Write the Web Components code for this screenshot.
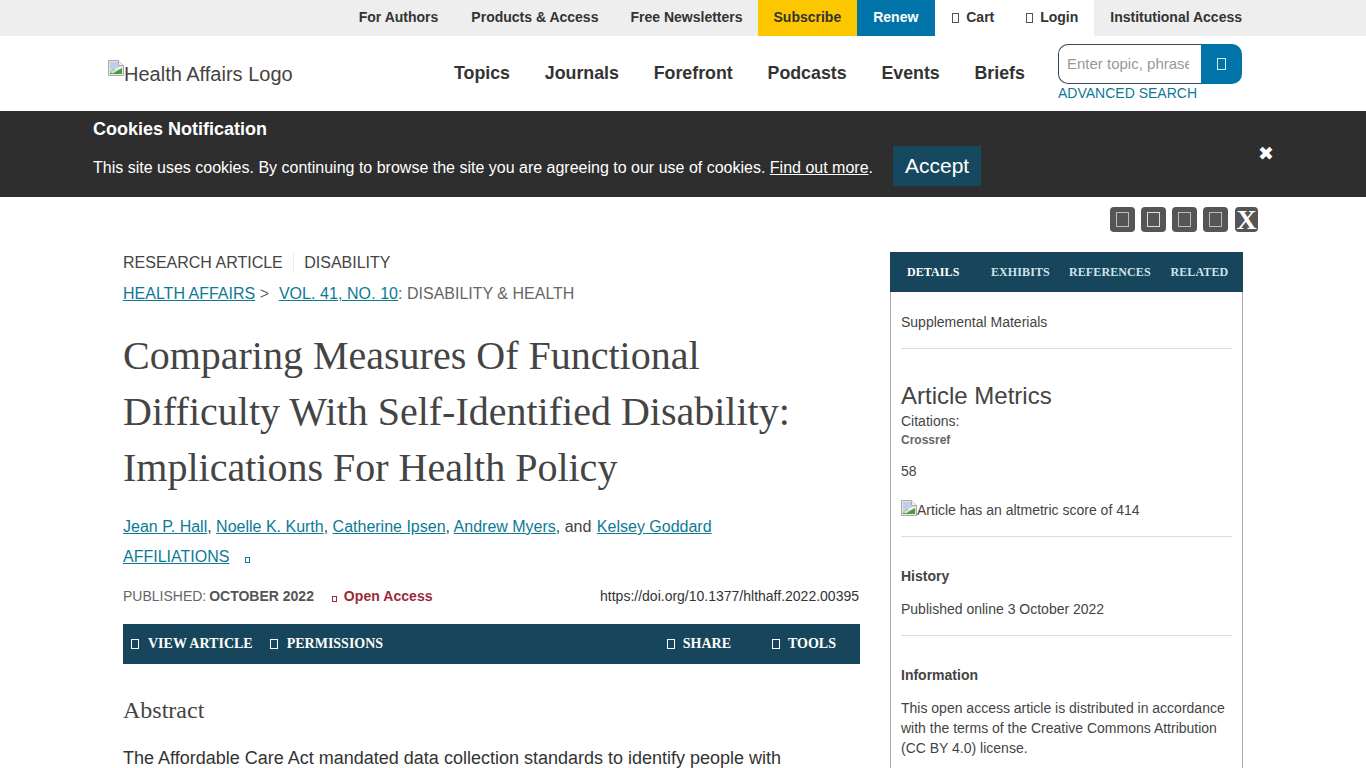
<!DOCTYPE html>
<html lang="en"><head><meta charset="utf-8"><title>Health Affairs</title>
<style>
html,body{margin:0;padding:0;height:768px;overflow:hidden;background:#fff}
body{font-family:"Liberation Sans",Arial,sans-serif;color:#333}
</style></head><body>
<ha-topbar></ha-topbar>
<ha-header></ha-header>
<ha-cookies></ha-cookies>
<ha-social></ha-social>
<ha-page>
  <ha-article></ha-article>
  <ha-sidebar slot="side"></ha-sidebar>
</ha-page>
<script>
const tofu=(w,h,c,sw=1)=>`<svg width="${w}" height="${h}" viewBox="0 0 ${w} ${h}" style="display:inline-block;vertical-align:-1px" aria-hidden="true"><rect x="${sw/2}" y="${sw/2}" width="${w-sw}" height="${h-sw}" fill="none" stroke="${c}" stroke-width="${sw}"/></svg>`;
const broken=`<svg width="16" height="16" viewBox="0 0 16 16" style="flex:none" aria-hidden="true"><path d="M.5.5h10l5 5v10H.5z" fill="#dfe6f0" stroke="#a9a9a9"/><path d="M10.5.5v5h5" fill="#f4f4f4" stroke="#a9a9a9"/><path d="M2 2h8v4h4v3H2z" fill="#bfcfe8"/><path d="M2 14v-3l4-2 3 1 5-2v6z" fill="#4f9a3e"/><path d="M1 12L13 6l1.500 1.500L5 13.500z" fill="#fff" opacity=".7"/></svg>`;
function def(name,html){customElements.define(name,class extends HTMLElement{constructor(){super();this.attachShadow({mode:'open'}).innerHTML=html}})}

def('ha-topbar',`<style>
:host{display:flex;justify-content:flex-end;height:36px;background:#eee;padding-right:108px;font:bold 14px/34px "Liberation Sans",Arial,sans-serif;color:#333}
span{padding:0 16px;display:block;white-space:nowrap}
.fa{padding-right:17px}.fn{padding-right:15px}
.sub{background:#fdc700}.ren{background:#0074a8;color:#fff;padding-right:17px}.w{background:#fff}
.cart{padding-left:17px}
svg{margin-right:3px}
</style>
<span class="fa">For Authors</span><span>Products &amp; Access</span><span class="fn">Free Newsletters</span><span class="sub">Subscribe</span><span class="ren">Renew</span><span class="w cart">${tofu(7,10,'#555')} Cart</span><span class="w">${tofu(7,10,'#555')} Login</span><span>Institutional Access</span>`);

def('ha-header',`<style>
:host{display:flex;align-items:flex-start;height:75px;box-sizing:border-box;padding:0 124px 0 108px;background:#fff;font-family:"Liberation Sans",Arial,sans-serif}
.logo{display:flex;align-items:flex-start;font-size:20px;line-height:23px;color:#444;margin-top:24px;width:346px;white-space:nowrap}
.logo span{margin-top:3px}
nav{display:flex;gap:34.8px;font-size:17.8px;font-weight:bold;line-height:21px;color:#333;margin-top:27px;flex:1;white-space:nowrap}
.s{width:184px;margin-top:8px;flex:none}
.box{display:flex;height:40px}
.in{width:143px;box-sizing:border-box;border:1px solid #33495a;border-right:0;border-radius:10px 0 0 10px;font-size:15px;color:#999;line-height:38px;padding-left:8px;overflow:hidden;white-space:nowrap}
.in i{display:block;width:122px;overflow:hidden;font-style:normal}
.b{width:41px;background:#0074a8;border-radius:0 10px 10px 0;display:flex;align-items:center;justify-content:center}
a{display:block;font-size:14px;line-height:18px;color:#0d7a94;white-space:nowrap}
</style>
<div class="logo">${broken}<span>Health Affairs Logo</span></div>
<nav><span>Topics</span><span>Journals</span><span>Forefront</span><span>Podcasts</span><span>Events</span><span>Briefs</span></nav>
<div class="s"><div class="box"><div class="in"><i>Enter topic, phrase</i></div><div class="b">${tofu(9,12,'#d8f0f5')}</div></div><a>ADVANCED SEARCH</a></div>`);

def('ha-cookies',`<style>
:host{display:block;height:86px;box-sizing:border-box;background:#2e2e2e;color:#fff;padding:8px 93px 0;position:relative;font-family:"Liberation Sans",Arial,sans-serif}
h2{margin:0;font-size:18px;line-height:21px;font-weight:bold}
.r{display:flex;align-items:center;margin-top:6px;font-size:16px;white-space:nowrap}
.r .tx{margin-top:4px}
a{color:#fff;text-decoration:underline}
.acc{margin-left:20px;background:#16495f;font-size:21px;line-height:40px;height:40px;padding:0 12px}
.x{position:absolute;left:1258px;top:31px;font-size:19px;line-height:22px;font-weight:bold;font-family:"DejaVu Sans",sans-serif}
</style>
<h2>Cookies Notification</h2>
<div class="r"><span class="tx">This site uses cookies. By continuing to browse the site you are agreeing to our use of cookies. <a>Find out more</a>.</span><span class="acc">Accept</span></div>
<span class="x">✖</span>`);

def('ha-social',`<style>
:host{display:flex;justify-content:flex-end;gap:6px;height:55px;box-sizing:border-box;padding:10px 108px 0 0}
b{width:25px;height:25px;border-radius:4px;background:#555;display:flex;align-items:center;justify-content:center;color:#fff}
b.x{width:23px;font:bold 28px/25px "Liberation Serif",serif;margin-left:1px}
b:first-child{margin-right:1px}
</style>
<b>${tofu(13,15,'#bbb')}</b><b>${tofu(13,15,'#ddd')}</b><b>${tofu(13,15,'#bbb')}</b><b>${tofu(13,15,'#bbb')}</b><b class="x">X</b>`);

def('ha-page',`<style>
:host{display:flex;justify-content:space-between;padding:0 123px;align-items:flex-start}
</style><slot></slot><slot name="side"></slot>`);

def('ha-article',`<style>
:host{display:block;width:737px;font-family:"Liberation Sans",Arial,sans-serif;color:#444}
a{color:#0d7a94;text-decoration:underline}
.t{font-size:16px;line-height:20px;color:#444;display:flex;padding-top:1px}
.t span+span{margin-left:10px;padding-left:10.5px;border-left:1px solid #eee}
.c{margin-top:11px;font-size:16px;line-height:20px;white-space:nowrap;color:#666}
.c .v{margin-left:1px;letter-spacing:.06px}
h1{font:400 40px/56px "Liberation Serif",serif;margin:24px 0 0;color:#444}
.au{margin-top:16px;font-size:16px;line-height:30px;white-space:nowrap;color:#444}
.au svg{margin-left:16px}
.au .k{margin-left:1px}
.m{display:flex;justify-content:space-between;margin-top:14px;font-size:14px;line-height:20px;white-space:nowrap}
.m .p{color:#666}.m b{color:#555;margin-left:-1px}.m .o{color:#9a2a37;font-weight:bold;margin-left:18px;letter-spacing:.05px}.o svg{margin-right:3px}
.m .d{color:#333;padding-right:1px}
.bar{display:flex;align-items:center;height:40px;margin-top:18px;background:#17465c;color:#fff;font:bold 14px/20px "Liberation Serif",serif;padding:0 24px 0 8px;white-space:nowrap}
.bar span{display:flex;align-items:center}
.bar svg{margin-right:8px}
.bar .a svg,.bar .pm svg{margin-right:9px}
.bar .a{margin-right:17px}
.bar .sp{flex:1}
.bar .b{margin-left:41px}
.ab{font:400 24px/28px "Liberation Serif",serif;margin:32px 0 0;color:#444}
p{font-size:18px;line-height:28px;margin:20px 0 0;color:#333;white-space:nowrap}
</style>
<div class="t"><span>RESEARCH ARTICLE</span><span>DISABILITY</span></div>
<div class="c"><a>HEALTH AFFAIRS</a> &gt;&nbsp; <a class="v">VOL. 41, NO. 10</a>: DISABILITY &amp; HEALTH</div>
<h1>Comparing Measures Of Functional<br>Difficulty With Self-Identified Disability:<br>Implications For Health Policy</h1>
<div class="au"><a>Jean P. Hall</a>, <a>Noelle K. Kurth</a>, <a>Catherine Ipsen</a>, <a>Andrew Myers</a>, and <a class="k">Kelsey Goddard</a><br><a>AFFILIATIONS</a>${tofu(5,6,'#0d7a94')}</div>
<div class="m"><span class="p">PUBLISHED: <b>OCTOBER 2022</b><span class="o">${tofu(5,6,'#9a2a37')} Open Access</span></span><span class="d">https://doi.org/10.1377/hlthaff.2022.00395</span></div>
<div class="bar"><span class="a">${tofu(8,10,'#fff')}VIEW ARTICLE</span><span class="pm">${tofu(8,10,'#fff')}PERMISSIONS</span><span class="sp"></span><span>${tofu(8,10,'#fff')}SHARE</span><span class="b">${tofu(8,10,'#fff')}TOOLS</span></div>
<div class="ab">Abstract</div>
<p>The Affordable Care Act mandated data collection standards to identify people with</p>`);

def('ha-sidebar',`<style>
:host{display:block;width:353px;box-sizing:border-box;font-family:"Liberation Sans",Arial,sans-serif;color:#444;font-size:14px;line-height:20px}
.tabs{position:relative;height:40px;background:#17465c;color:#cfe3ec;font:bold 12px/40px "Liberation Serif",serif;letter-spacing:.1px;white-space:nowrap}
.tabs span{position:absolute}
.tabs .on{color:#fff}
.body{border:1px solid #aaa;border-top:0;padding:0 10px;height:600px}
.sec{border-bottom:1px solid #ddd}
.s1{padding-top:20px;height:36px}
.s2{padding-top:33px;height:154px}
h3{margin:0;font-size:24px;line-height:28px;font-weight:400}
.ct{margin-top:1px}
.sm{font-size:12px;font-weight:bold;color:#666;line-height:16px;padding-top:1px}
.al{display:flex;align-items:flex-start;margin-top:19px}
h4{margin:0;font-size:14px;line-height:20px;font-weight:bold}
.h{padding-top:29px;height:69px}
.i p,.h p{margin:13px 0 0}
</style>
<div class="tabs"><span class="on" style="left:17px">DETAILS</span><span style="left:101px">EXHIBITS</span><span style="left:179px">REFERENCES</span><span style="left:280.500px">RELATED</span></div>
<div class="body">
<div class="sec s1">Supplemental Materials</div>
<div class="sec s2"><h3>Article Metrics</h3><div class="ct">Citations:</div><div class="sm">Crossref</div><div style="margin-top:13px">58</div><div class="al">${broken}<span>Article has an altmetric score of 414</span></div></div>
<div class="sec h"><h4>History</h4><p>Published online 3 October 2022</p></div>
<div class="h i" style="height:auto"><h4>Information</h4><p>This open access article is distributed in accordance with the terms of the Creative Commons Attribution (CC BY 4.0) license.</p></div>
</div>`);
</script>
</body></html>
